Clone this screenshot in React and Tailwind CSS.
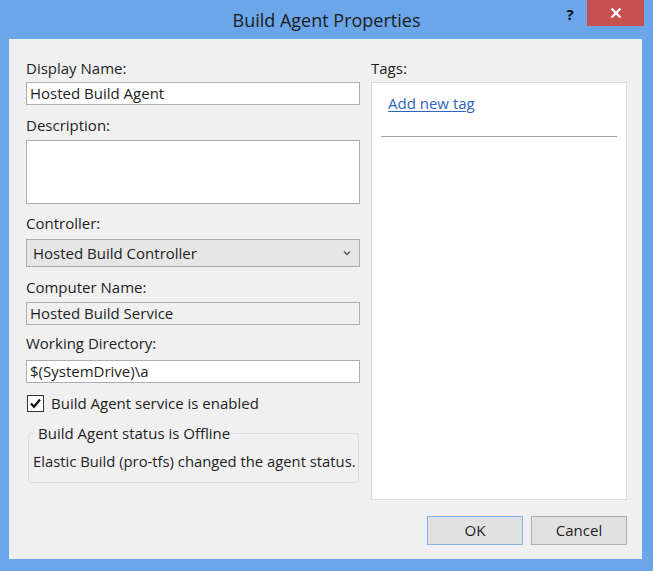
import React from "react";

const font = { fontFamily: '"Open Sans", "Noto Sans", "Liberation Sans", sans-serif' };

function Label({ children }) {
  return <div className="h-[20px] leading-[20px] text-[15px] text-[#1e1e1e]">{children}</div>;
}

export default function App() {
  return (
    <div
      className="w-[653px] h-[571px] bg-[#6ba5ea] flex flex-col overflow-hidden"
      style={font}
    >
      <div className="relative h-[39px] flex items-center justify-center shrink-0">
        <div className="text-[18px] text-[#1c1c1c] leading-none mt-[1px]">Build Agent Properties</div>
        <div className="absolute top-0 right-[9px] flex items-start">
          <div className="w-[26px] h-[26px] flex items-center justify-center text-[15px] font-bold text-[#111] mr-[4px] mt-[1px]">?</div>
          <div className="w-[57px] h-[26px] bg-[#c75050] flex items-center justify-center">
            <svg width="12" height="12" viewBox="0 0 12 12">
              <path d="M1.5 1.5 L10.5 10.5 M10.5 1.5 L1.5 10.5" stroke="#fff" strokeWidth="2.2" />
            </svg>
          </div>
        </div>
      </div>
      <div className="ml-[9px] w-[633px] h-[520px] bg-[#f0f0f0] flex pl-[17px] pt-[19px]">
        <div className="w-[334px] flex flex-col">
          <Label>Display Name:</Label>
          <div className="mt-[4px] h-[23px] bg-white border border-[#abadb3] pl-[3px] text-[15px] leading-[21px] text-[#1e1e1e]">
            Hosted Build Agent
          </div>
          <div className="mt-[10px]"><Label>Description:</Label></div>
          <div className="mt-[5px] h-[64px] bg-white border border-[#abadb3]" />
          <div className="mt-[9px]"><Label>Controller:</Label></div>
          <div className="mt-[6px] h-[28px] bg-[#e6e6e6] border border-[#acacac] pl-[6px] pr-[8px] flex items-center justify-between text-[15px] text-[#1e1e1e]">
            <span>Hosted Build Controller</span>
            <svg width="8" height="6" viewBox="0 0 8 6">
              <path d="M1 1.5 L4 4.5 L7 1.5" stroke="#555" strokeWidth="1.4" fill="none" />
            </svg>
          </div>
          <div className="mt-[10px]"><Label>Computer Name:</Label></div>
          <div className="mt-[5px] h-[23px] bg-[#f0f0f0] border border-[#adadad] pl-[3px] text-[15px] leading-[21px] text-[#1e1e1e]">
            Hosted Build Service
          </div>
          <div className="mt-[8px]"><Label>Working Directory:</Label></div>
          <div className="mt-[7px] h-[23px] bg-white border border-[#abadb3] pl-[3px] text-[15px] leading-[21px] text-[#1e1e1e]">
            $(SystemDrive)\a
          </div>
          <div className="mt-[11px] h-[18px] flex items-center pl-[1px]">
            <div className="w-[17px] h-[17px] bg-white border border-[#333] flex items-center justify-center">
              <svg width="13" height="13" viewBox="0 0 13 13">
                <path d="M2 6.5 L5 9.8 L11 2.5" stroke="#111" strokeWidth="2.3" fill="none" />
              </svg>
            </div>
            <span className="ml-[7px] text-[15px] text-[#1e1e1e]">Build Agent service is enabled</span>
          </div>
          <fieldset className="mt-[11px] ml-[2px] mr-[1px] border border-[#dcdcdc] rounded-[3px] pl-[6px] pb-[11px] min-w-0">
            <legend className="px-[3px] h-[20px] leading-[20px] text-[15px] text-[#1e1e1e]">Build Agent status is Offline</legend>
            <div className="mt-[8px] -ml-[2px] h-[20px] leading-[20px] text-[14.8px] text-[#1e1e1e] whitespace-nowrap">
              Elastic Build (pro-tfs) changed the agent status.
            </div>
          </fieldset>
        </div>
        <div className="ml-[11px] w-[256px] flex flex-col">
          <Label>Tags:</Label>
          <div className="mt-[4px] h-[418px] bg-white border border-[#dadada] flex flex-col">
            <div className="mt-[10px] pl-[16px] h-[20px] leading-[20px] text-[15px]">
              <span className="text-[#2f64bd] underline underline-offset-2">Add new tag</span>
            </div>
            <div className="mt-[23px] mx-[9px] h-px bg-[#a0a0a0]" />
          </div>
          <div className="mt-[16px] flex justify-end gap-[8px]">
            <div className="w-[96px] h-[29px] bg-[#e1e1e1] border border-[#7eb4ea] flex items-center justify-center text-[15px] text-[#1e1e1e]">OK</div>
            <div className="w-[96px] h-[29px] bg-[#e1e1e1] border border-[#adadad] flex items-center justify-center text-[15px] text-[#1e1e1e]">Cancel</div>
          </div>
        </div>
      </div>
    </div>
  );
}
